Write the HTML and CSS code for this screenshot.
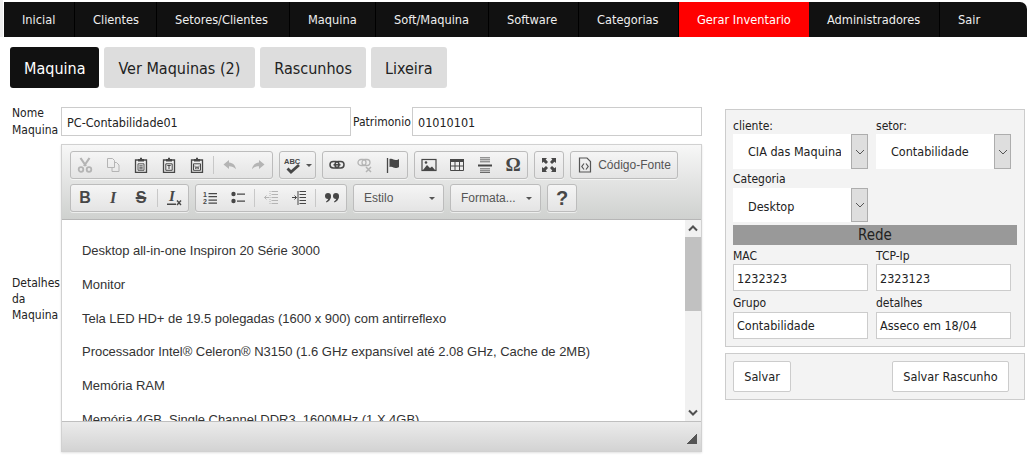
FILE: index.html
```html
<!DOCTYPE html>
<html lang="pt">
<head>
<meta charset="utf-8">
<title>Maquina</title>
<link rel="stylesheet" href="styles.css">
</head>
<body>
<svg class="defs" width="0" height="0" aria-hidden="true">
  <symbol id="i-cut" viewBox="0 0 16 16"><path d="M3.500 1l5.500 8M12.500 1L7 9" fill="none" stroke="currentColor" stroke-width="2.200"/><circle cx="4" cy="12.500" r="2.300" fill="none" stroke="currentColor" stroke-width="1.800"/><circle cx="12" cy="12.500" r="2.300" fill="none" stroke="currentColor" stroke-width="1.800"/></symbol>
  <symbol id="i-copy" viewBox="0 0 16 16"><path d="M2.500 1.500h5l2 2v7h-7zM9.500 5.500h2l2.500 2.500v6.500h-7v-4" fill="none" stroke="currentColor"/></symbol>
  <symbol id="i-paste" viewBox="0 0 16 16"><path d="M5 3H2.500v12.300h11V3H11" fill="none" stroke="currentColor" stroke-width="1.300"/><path d="M5 4.500V2h2V.8h2V2h2v2.500z" fill="currentColor"/><path d="M5 6.800h6v6.500H5zM6.300 8.800h3.400M6.300 10.300h3.400M6.300 11.800h3.400" fill="none" stroke="currentColor" stroke-width=".9"/></symbol>
  <symbol id="i-pastet" viewBox="0 0 16 16"><path d="M5 3H2.500v12.300h11V3H11" fill="none" stroke="currentColor" stroke-width="1.300"/><path d="M5 4.500V2h2V.8h2V2h2v2.500z" fill="currentColor"/><path d="M4.800 6.800h6.400v6.500H4.800zM6.300 8.500h3.400M8 8.500v3.500" fill="none" stroke="currentColor"/></symbol>
  <symbol id="i-pastew" viewBox="0 0 16 16"><path d="M5 3H2.500v12.300h11V3H11" fill="none" stroke="currentColor" stroke-width="1.300"/><path d="M5 4.500V2h2V.8h2V2h2v2.500z" fill="currentColor"/><path d="M4.500 6.800h7v6.500h-7z" fill="none" stroke="currentColor"/><path d="M5.800 8.500l1 3.500 1.200-2.500 1.200 2.500 1-3.500" fill="none" stroke="currentColor" stroke-width=".8"/></symbol>
  <symbol id="i-undo" viewBox="0 0 16 16"><path d="M7 3L1.500 7.500 7 12V9.200c3 0 5 1 7 3-.5-3.500-3-6.500-7-6.700z" fill="currentColor"/></symbol>
  <symbol id="i-redo" viewBox="0 0 16 16"><path d="M9 3l5.500 4.500L9 12V9.200c-3 0-5 1-7 3 .5-3.500 3-6.500 7-6.700z" fill="currentColor"/></symbol>
  <symbol id="i-link" viewBox="0 0 16 16"><rect x="1" y="4.500" width="9" height="6.500" rx="3.200" fill="none" stroke="currentColor" stroke-width="1.500"/><rect x="6" y="4.500" width="9" height="6.500" rx="3.200" fill="none" stroke="currentColor" stroke-width="1.500"/><path d="M4.500 7.800h7" stroke="currentColor" stroke-width="1.500"/></symbol>
  <symbol id="i-unlink" viewBox="0 0 16 16"><rect x="1" y="2.500" width="8" height="6" rx="3" fill="none" stroke="currentColor" stroke-width="1.300"/><rect x="5" y="2.500" width="8" height="6" rx="3" fill="none" stroke="currentColor" stroke-width="1.300"/><path d="M9 10l5 5M14 10l-5 5" stroke="currentColor" stroke-width="1.500"/></symbol>
  <symbol id="i-flag" viewBox="0 0 16 16"><path d="M2.500 1v15" stroke="currentColor" stroke-width="1.300"/><path d="M4.500 2c3-1 4 1 6 1s3-.5 3.500-1v8c-1 .7-2 1-3.500 1-2 0-3-2-6-1z" fill="currentColor"/></symbol>
  <symbol id="i-image" viewBox="0 0 16 16"><rect x="1" y="2.500" width="14" height="11" fill="none" stroke="currentColor" stroke-width="1.200"/><path d="M2 13l4-5 3 3 2-1.500 3 3.500z" fill="currentColor"/><circle cx="5" cy="5.500" r="1.300" fill="currentColor"/></symbol>
  <symbol id="i-table" viewBox="0 0 16 16"><path d="M1 2h14v3H1z" fill="currentColor"/><path d="M1.500 2.500h13v11h-13zM1.500 9h13M6 5v8.500M10.500 5v8.500" fill="none" stroke="currentColor"/></symbol>
  <symbol id="i-hr" viewBox="0 0 16 16"><path d="M3 .8h10M3 2.800h10M3 4.800h10M3 11.800h10M3 13.800h10M3 15.500h10" stroke="currentColor" stroke-width=".8"/><path d="M1 7.500h14v2H1z" fill="currentColor"/></symbol>
  <symbol id="i-max" viewBox="0 0 16 16"><path d="M1 1h5L4.700 2.500 7 5 5 7 2.500 4.700 1 6zM15 1v5l-1.500-1.300L11 7 9 5l2.300-2.500L10 1zM1 15v-5l1.500 1.300L5 9l2 2-2.300 2.500L6 15zM15 15h-5l1.300-1.500L9 11l2-2 2.500 2.300L15 10z" fill="currentColor"/></symbol>
  <symbol id="i-source" viewBox="0 0 16 16"><path d="M2.500 1h7.500l3.500 3.500V15h-11z" fill="none" stroke="currentColor" stroke-width="1.200"/><path d="M7 6.500L4.800 9.500 7 12.500M9 6.500l2.200 3-2.200 3" fill="none" stroke="currentColor" stroke-width="1.200"/></symbol>
  <symbol id="i-check" viewBox="0 0 22 18"><path d="M4.500 12.500l3.500 3.500 8-7" fill="none" stroke="currentColor" stroke-width="2.800"/></symbol>
  <symbol id="i-clear-x" viewBox="0 0 16 16"><path d="M1 13.500h9v1.500H1z" fill="currentColor"/><path d="M11 10.500l4 4.500M15 10.500l-4 4.500" stroke="currentColor" stroke-width="1.400"/></symbol>
  <symbol id="i-ol" viewBox="0 0 16 16"><path d="M6.500 3h8.500v1.300H6.500zM6.500 6h8.500v1.300H6.500zM6.500 9.500h8.500v1.300H6.500zM6.500 12.500h8.500v1.300H6.500z" fill="currentColor"/></symbol>
  <symbol id="i-ul" viewBox="0 0 16 16"><path d="M7 3.500h8v1.300H7zM7 10.500h8v1.300H7z" fill="currentColor"/><circle cx="3.500" cy="4" r="2.200" fill="currentColor"/><circle cx="3.500" cy="11" r="2.200" fill="currentColor"/></symbol>
  <symbol id="i-outdent" viewBox="0 0 16 16"><path d="M8.500 1.500h6.500M8.500 4.500h6.500M8.500 7.500h6.500M8.500 10.500h6.500M8.500 13.500h6.500" stroke="currentColor"/><path d="M6 7.500H1.500M3.500 5.500l-2 2 2 2" fill="none" stroke="currentColor"/><path d="M7 1v14" stroke="currentColor" stroke-dasharray="1 1"/></symbol>
  <symbol id="i-indent" viewBox="0 0 16 16"><path d="M8.500 1.500h6.500M8.500 4.500h6.500M8.500 7.500h6.500M8.500 10.500h6.500M8.500 13.500h6.500" stroke="currentColor"/><path d="M1 7.500h4.500M3.500 5.500l2 2-2 2" fill="none" stroke="currentColor"/><path d="M7 1v14" stroke="currentColor"/></symbol>
  <symbol id="i-quote" viewBox="0 0 16 16"><circle cx="4" cy="6" r="3" fill="currentColor"/><path d="M7 6c0 3.500-2 5.500-4.500 6.500L2 11.500C3.500 10.500 4.500 9 4.500 7z" fill="currentColor"/><circle cx="12" cy="6" r="3" fill="currentColor"/><path d="M15 6c0 3.500-2 5.500-4.500 6.500l-.5-1C11.500 10.500 12.500 9 12.500 7z" fill="currentColor"/></symbol>
</svg>

<header class="menu-wrap">
<nav class="menu">
  <a class="menu-item w1">Inicial</a>
  <a class="menu-item w2">Clientes</a>
  <a class="menu-item w3">Setores/Clientes</a>
  <a class="menu-item w4">Maquina</a>
  <a class="menu-item w5">Soft/Maquina</a>
  <a class="menu-item w6">Software</a>
  <a class="menu-item w7">Categorias</a>
  <a class="menu-item w8 menu-red">Gerar Inventario</a>
  <a class="menu-item w9">Administradores</a>
  <a class="menu-item w10">Sair</a>
</nav>
</header>

<div class="tabs">
  <a class="tab tab-on">Maquina</a>
  <a class="tab tab-wide">Ver Maquinas (2)</a>
  <a class="tab">Rascunhos</a>
  <a class="tab">Lixeira</a>
</div>

<main class="layout">
  <section class="left">
    <div class="top-row">
      <label class="side-label">Nome Maquina</label>
      <div class="text-box grow">PC-Contabilidade01</div>
      <label class="pat-label">Patrimonio</label>
      <div class="text-box grow">01010101</div>
    </div>
    <div class="editor-row">
      <label class="side-label detail-label">Detalhes da Maquina</label>
      <div class="editor">
        <div class="toolbar">
          <div class="tb-row">
            <div class="group">
              <span class="btn off"><svg class="ic"><use href="#i-cut"/></svg></span>
              <span class="btn off"><svg class="ic"><use href="#i-copy"/></svg></span>
              <span class="btn"><svg class="ic"><use href="#i-paste"/></svg></span>
              <span class="btn"><svg class="ic"><use href="#i-pastet"/></svg></span>
              <span class="btn"><svg class="ic"><use href="#i-pastew"/></svg></span>
              <span class="sep"></span>
              <span class="btn off"><svg class="ic"><use href="#i-undo"/></svg></span>
              <span class="btn off"><svg class="ic"><use href="#i-redo"/></svg></span>
            </div>
            <div class="group">
              <span class="btn spell"><svg class="ic-wide" viewBox="0 0 22 18"><text x="1" y="8" class="svg-abc">ABC</text><use href="#i-check"/></svg><i class="caret"></i></span>
            </div>
            <div class="group">
              <span class="btn"><svg class="ic"><use href="#i-link"/></svg></span>
              <span class="btn off"><svg class="ic"><use href="#i-unlink"/></svg></span>
              <span class="btn"><svg class="ic"><use href="#i-flag"/></svg></span>
            </div>
            <div class="group">
              <span class="btn"><svg class="ic"><use href="#i-image"/></svg></span>
              <span class="btn"><svg class="ic"><use href="#i-table"/></svg></span>
              <span class="btn"><svg class="ic"><use href="#i-hr"/></svg></span>
              <span class="btn glyph-omega">Ω</span>
            </div>
            <div class="group">
              <span class="btn"><svg class="ic"><use href="#i-max"/></svg></span>
            </div>
            <div class="group">
              <span class="btn source"><svg class="ic"><use href="#i-source"/></svg><span>Código-Fonte</span></span>
            </div>
          </div>
          <div class="tb-row">
            <div class="group">
              <span class="btn glyph-b">B</span>
              <span class="btn glyph-i">I</span>
              <span class="btn glyph-s">S</span>
              <span class="sep"></span>
              <span class="btn glyph-tx"><span class="tx-i">I</span><svg class="ic tx-x"><use href="#i-clear-x"/></svg></span>
            </div>
            <div class="group">
              <span class="btn"><svg class="ic" viewBox="0 0 16 16"><text x="1" y="7" class="svg-n">1</text><text x="1" y="14" class="svg-n">2</text><use href="#i-ol"/></svg></span>
              <span class="btn"><svg class="ic"><use href="#i-ul"/></svg></span>
              <span class="sep"></span>
              <span class="btn off"><svg class="ic"><use href="#i-outdent"/></svg></span>
              <span class="btn"><svg class="ic"><use href="#i-indent"/></svg></span>
              <span class="sep"></span>
              <span class="btn"><svg class="ic"><use href="#i-quote"/></svg></span>
            </div>
            <div class="group combo combo-a"><span>Estilo</span><i class="caret"></i></div>
            <div class="group combo combo-b"><span>Formata...</span><i class="caret"></i></div>
            <div class="group">
              <span class="btn glyph-help">?</span>
            </div>
          </div>
        </div>
        <div class="content-wrap">
          <div class="content">
            <p>Desktop all-in-one Inspiron 20 Série 3000</p>
            <p>Monitor</p>
            <p>Tela LED HD+ de 19.5 polegadas (1600 x 900) com antirreflexo</p>
            <p>Processador Intel® Celeron® N3150 (1.6 GHz expansível até 2.08 GHz, Cache de 2MB)</p>
            <p>Memória RAM</p>
            <p>Memória 4GB, Single Channel DDR3, 1600MHz (1 X 4GB)</p>
          </div>
          <div class="scrollbar">
            <svg class="sb-arrow" viewBox="0 0 16 17"><path d="M4 10.500l4-4 4 4" fill="none" stroke="#505050" stroke-width="2"/></svg>
            <div class="sb-thumb"></div>
            <div class="sb-fill"></div>
            <svg class="sb-arrow" viewBox="0 0 16 17"><path d="M4 6.500l4 4 4-4" fill="none" stroke="#505050" stroke-width="2"/></svg>
          </div>
        </div>
        <div class="statusbar"><i class="resizer"></i></div>
      </div>
    </div>
  </section>

  <aside class="right">
    <div class="panel panel-main">
      <div class="cols">
        <div class="field">
          <label class="f-label">cliente:</label>
          <div class="select"><span class="select-val">CIA das Maquinas</span><span class="select-btn"><svg viewBox="0 0 10 6" class="chev"><path d="M1 1l4 4 4-4" fill="none" stroke="#555"/></svg></span></div>
        </div>
        <div class="field">
          <label class="f-label">setor:</label>
          <div class="select"><span class="select-val">Contabilidade</span><span class="select-btn"><svg viewBox="0 0 10 6" class="chev"><path d="M1 1l4 4 4-4" fill="none" stroke="#555"/></svg></span></div>
        </div>
      </div>
      <div class="cols cat">
        <div class="field">
          <label class="f-label">Categoria</label>
          <div class="select"><span class="select-val">Desktop</span><span class="select-btn"><svg viewBox="0 0 10 6" class="chev"><path d="M1 1l4 4 4-4" fill="none" stroke="#555"/></svg></span></div>
        </div>
      </div>
      <div class="rede">Rede</div>
      <div class="cols mac">
        <div class="field"><label class="f-label">MAC</label><div class="small-box">1232323</div></div>
        <div class="field"><label class="f-label">TCP-Ip</label><div class="small-box">2323123</div></div>
      </div>
      <div class="cols grp">
        <div class="field"><label class="f-label">Grupo</label><div class="small-box">Contabilidade</div></div>
        <div class="field"><label class="f-label">detalhes</label><div class="small-box">Asseco em 18/04</div></div>
      </div>
    </div>
    <div class="panel panel-actions">
      <button class="act act-a" type="button">Salvar</button>
      <button class="act act-b" type="button">Salvar Rascunho</button>
    </div>
  </aside>
</main>
</body>
</html>
```

FILE: styles.css
```css
* { box-sizing: border-box; }
html, body { margin: 0; padding: 0; background: #fff; }
body {
  width: 1028px;
  height: 462px;
  overflow: hidden;
  font-family: "DejaVu Sans", sans-serif;
  font-stretch: condensed;
  font-size: 12px;
  color: #222;
}
.defs { position: absolute; }
.svg-abc { font: bold 7.500px "Liberation Sans", sans-serif; fill: currentColor; }
.svg-n { font: bold 7px "Liberation Sans", sans-serif; fill: currentColor; }

.menu-wrap { padding: 2px 1px 0 4px; background: linear-gradient(to right, #eee 3px, #fff 3px); }
.menu { display: flex; height: 35px; background: #111; border-radius: 0 7px 0 0; }
.menu-item { display: flex; align-items: center; padding-left: 18px; color: #eee; font-size: 12.7px; border-right: 1px solid #000; white-space: nowrap; }
.w1 { width: 71px; } .w2 { width: 82px; } .w3 { width: 133px; } .w4 { width: 86px; } .w5 { width: 113px; }
.w6 { width: 90px; } .w7 { width: 100px; } .w8 { width: 130px; } .w9 { width: 131px; } .w10 { width: 87px; border-right: 0; }
.menu-red { background: #f00; color: #fff; border-right: 0; }

.tabs { display: flex; gap: 5px; margin: 10px 0 0 10px; height: 41px; }
.tab { display: flex; align-items: center; padding: 1px 14px 0; background: #ddd; color: #222; font-size: 16px; border-radius: 3px; }
.tab-wide { padding-right: 15px; }
.tab-on { background: #111; color: #fff; }

.layout { display: flex; margin: 19px 0 0 10px; }
.left { width: 692px; }
.right { width: 300px; margin-left: 23px; padding-top: 2px; }

.top-row { display: flex; align-items: stretch; height: 29px; }
.side-label { width: 51px; padding-left: 2px; font-size: 12px; line-height: 17px; flex: none; }
.top-row .side-label { margin-top: -2px; }
.pat-label { width: 61px; padding-left: 2px; font-size: 12px; line-height: 31px; flex: none; }
.text-box { border: 1px solid #ccc; background: #fff; padding-left: 5px; line-height: 29px; font-size: 12.5px; color: #222; }
.grow { flex: 1; }

.editor-row { display: flex; align-items: center; margin-top: 8px; }
.detail-label { margin-top: 1px; line-height: 16px; }
.editor { flex: 1; height: 308px; display: flex; flex-direction: column; border: 1px solid #d1d1d1; box-shadow: 0 1px 2px rgba(0,0,0,.12); }
.toolbar { height: 75px; padding: 6px 0 0 8px; background: linear-gradient(#f7f7f7, #cfd1cf); border-bottom: 1px solid #b6b6b6; flex: none; }
.tb-row { display: flex; gap: 6px; height: 28px; margin-bottom: 5px; }
.group { display: flex; height: 28px; border: 1px solid #bcbcbc; border-radius: 3px; background: linear-gradient(#f5f5f5, #e4e4e4); box-shadow: 0 1px 0 rgba(255,255,255,.6); }
.btn { width: 28px; height: 26px; display: flex; align-items: center; justify-content: center; color: #474747; }
.off { color: #b4b4b4; }
.ic { width: 16px; height: 16px; }
.ic-wide { width: 22px; height: 18px; }
.sep { width: 5px; display: flex; justify-content: center; }
.sep::before { content: ""; width: 1px; height: 18px; margin-top: 4px; background: #c8c8c8; }
.spell { width: 35px; gap: 1px; }
.caret { width: 0; height: 0; border: 3px solid transparent; border-top-color: #555; border-bottom: 0; flex: none; }
.source { width: 106px; gap: 5px; font-family: "Liberation Sans", sans-serif; font-stretch: normal; font-size: 12px; color: #555; }
.combo { align-items: center; justify-content: space-between; padding: 0 8px 0 10px; font-family: "Liberation Sans", sans-serif; font-stretch: normal; font-size: 12px; color: #555; }
.combo-a { width: 91px; }
.combo-b { width: 91px; }

.glyph-b, .glyph-s { font: bold 16px "Liberation Sans", sans-serif; }
.glyph-i { font: italic bold 16px "Liberation Serif", serif; }
.glyph-s { text-decoration: line-through; text-decoration-thickness: 1.5px; }
.glyph-tx { position: relative; font: italic bold 15px "Liberation Serif", serif; }
.tx-i { margin: -3px 0 0 -4px; }
.tx-x { position: absolute; left: 6px; top: 5px; }
.glyph-help { font: bold 20px "Liberation Sans", sans-serif; }
.glyph-omega { font: bold 19px "Liberation Serif", serif; }

.content-wrap { display: flex; height: 201px; flex: none; background: #fff; overflow: hidden; }
.content { flex: 1; padding: 21px 0 0 20px; font-family: "Liberation Sans", sans-serif; font-stretch: normal; font-size: 13px; letter-spacing: -.03px; line-height: 20.8px; color: #333; overflow: hidden; white-space: nowrap; }
.content p { margin: 0 0 13px; }
.scrollbar { width: 16px; flex: none; background: #f1f1f1; display: flex; flex-direction: column; }
.sb-arrow { width: 16px; height: 17px; flex: none; }
.sb-thumb { height: 74px; background: #c1c1c1; flex: none; }
.sb-fill { flex: 1; }
.statusbar { flex: 1; display: flex; justify-content: flex-end; align-items: flex-end; padding: 0 4px 7px 0; background: linear-gradient(#ebebeb, #d3d3d3); border-top: 1px solid #bfbfbf; }
.resizer { width: 10px; height: 10px; background: linear-gradient(135deg, transparent 50%, #555 50%); }

.panel { background: #f3f3f3; border: 1px solid #ccc; }
.panel-main { height: 238px; padding: 8px 7px 0; }
.cols { display: flex; gap: 8px; }
.field { width: 135px; }
.f-label { display: block; font-size: 12px; line-height: 16px; }
.select { display: flex; height: 35px; background: #fff; font-size: 12.5px; }
.select-val { flex: 1; min-width: 0; overflow: hidden; white-space: nowrap; line-height: 35px; margin: 0 10px 0 15px; }
.select-btn { width: 17px; flex: none; display: flex; align-items: center; justify-content: center; background: #dedede; border: 1px solid #adadad; }
.chev { width: 10px; height: 6px; }
.cat { margin-top: 2px; }
.cat .select { margin-top: 1px; height: 34px; }
.cat .select-val { line-height: 37px; }
.rede { width: 284px; height: 20px; margin-top: 3px; background: #999; text-align: center; font-size: 15px; line-height: 21px; color: #222; }
.mac { margin-top: 3px; }
.grp { margin-top: 4px; }
.grp .small-box { margin-top: 1px; line-height: 26px; }
.small-box { height: 27px; border: 1px solid #ccc; background: #fff; padding-left: 3px; line-height: 27px; font-size: 12.5px; }

.panel-actions { height: 47px; margin-top: 6px; padding: 7px 15px 0 7px; display: flex; justify-content: space-between; }
.act { height: 31px; padding: 0; background: #fff; border: 1px solid #ccc; border-radius: 2px; font: inherit; font-stretch: condensed; font-size: 12.6px; color: #222; }
.act-a { width: 58px; }
.act-b { width: 117px; }
```
